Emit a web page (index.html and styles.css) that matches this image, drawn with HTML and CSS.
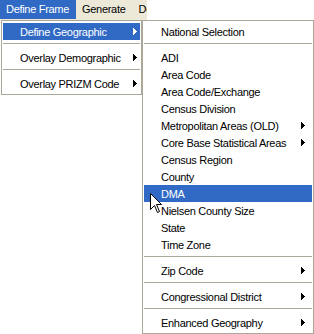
FILE: index.html
```html
<!DOCTYPE html>
<html>
<head>
<meta charset="utf-8">
<link rel="stylesheet" href="styles.css">
</head>
<body>
<div class="menubar">
  <span class="top active">Define Frame</span>
  <span class="top">Generate</span>
  <span class="top">De</span>
</div>
<div class="menus">
  <ul class="menu main">
    <li class="item hl"><span class="label">Define Geographic</span><svg class="arrow" width="4" height="7" viewBox="0 0 4 7"><path d="M0 0h1v7h-1zM1 1h1v5h-1zM2 2h1v3h-1zM3 3h1v1h-1z"/></svg></li>
    <li class="sep"></li>
    <li class="item"><span class="label">Overlay Demographic</span><svg class="arrow" width="4" height="7" viewBox="0 0 4 7"><path d="M0 0h1v7h-1zM1 1h1v5h-1zM2 2h1v3h-1zM3 3h1v1h-1z"/></svg></li>
    <li class="sep"></li>
    <li class="item"><span class="label">Overlay PRIZM Code</span><svg class="arrow" width="4" height="7" viewBox="0 0 4 7"><path d="M0 0h1v7h-1zM1 1h1v5h-1zM2 2h1v3h-1zM3 3h1v1h-1z"/></svg></li>
  </ul>
  <ul class="menu sub">
    <li class="item"><span class="label">National Selection</span></li>
    <li class="sep"></li>
    <li class="item"><span class="label">ADI</span></li>
    <li class="item"><span class="label">Area Code</span></li>
    <li class="item"><span class="label">Area Code/Exchange</span></li>
    <li class="item"><span class="label">Census Division</span></li>
    <li class="item"><span class="label">Metropolitan Areas (OLD)</span><svg class="arrow" width="4" height="7" viewBox="0 0 4 7"><path d="M0 0h1v7h-1zM1 1h1v5h-1zM2 2h1v3h-1zM3 3h1v1h-1z"/></svg></li>
    <li class="item"><span class="label">Core Base Statistical Areas</span><svg class="arrow" width="4" height="7" viewBox="0 0 4 7"><path d="M0 0h1v7h-1zM1 1h1v5h-1zM2 2h1v3h-1zM3 3h1v1h-1z"/></svg></li>
    <li class="item"><span class="label">Census Region</span></li>
    <li class="item"><span class="label">County</span></li>
    <li class="item hl"><span class="label">DMA</span></li>
    <li class="item"><span class="label">Nielsen County Size</span></li>
    <li class="item"><span class="label">State</span></li>
    <li class="item"><span class="label">Time Zone</span></li>
    <li class="sep"></li>
    <li class="item"><span class="label">Zip Code</span><svg class="arrow" width="4" height="7" viewBox="0 0 4 7"><path d="M0 0h1v7h-1zM1 1h1v5h-1zM2 2h1v3h-1zM3 3h1v1h-1z"/></svg></li>
    <li class="sep"></li>
    <li class="item"><span class="label">Congressional District</span><svg class="arrow" width="4" height="7" viewBox="0 0 4 7"><path d="M0 0h1v7h-1zM1 1h1v5h-1zM2 2h1v3h-1zM3 3h1v1h-1z"/></svg></li>
    <li class="sep"></li>
    <li class="item"><span class="label">Enhanced Geography</span><svg class="arrow" width="4" height="7" viewBox="0 0 4 7"><path d="M0 0h1v7h-1zM1 1h1v5h-1zM2 2h1v3h-1zM3 3h1v1h-1z"/></svg></li>
  </ul>
</div>
<svg class="cursor" width="13" height="20" viewBox="0 0 13 20"><path d="M0.5 0.5 L0.5 16.5 L4.5 12.5 L7.5 19.5 L9.5 18.5 L6.5 11.5 L11.5 11.5 Z" fill="#fff" stroke="#000" stroke-width="1" stroke-linejoin="miter"/></svg>
</body>
</html>
```
FILE: styles.css
```css
* { box-sizing: border-box; }
html, body {
  margin: 0;
  padding: 0;
  background: #fff;
}
body {
  position: relative;
  width: 314px;
  height: 334px;
  overflow: hidden;
  font-family: "Liberation Sans", Arial, sans-serif;
  font-size: 11px;
  letter-spacing: -0.3px;
  color: #000;
}
.menubar {
  display: flex;
  width: 147px;
  height: 20px;
  background: #ece9d8;
  overflow: hidden;
  white-space: nowrap;
}
.top {
  height: 19px;
  line-height: 19px;
  padding: 0 7px 0 6px;
}
.top.active {
  background: #316ac5;
  color: #fff;
}
.menus {
  display: flex;
  align-items: flex-start;
}
.menu {
  list-style: none;
  margin: 0;
  background: #fff;
  border: 1px solid #aca899;
  padding: 2px 1px;
}
.main {
  width: 141px;
  margin-left: 1px;
}
.sub {
  width: 172px;
}
.item {
  display: flex;
  align-items: center;
  height: 17px;
  white-space: nowrap;
}
.main .item { padding: 0 3px 0 17px; }
.sub .item { padding: 0 7px 0 17px; }
.label { flex: 1; }
.arrow { fill: #000; display: block; }
.item.hl {
  background: #316ac5;
  color: #fff;
}
.item.hl .arrow { fill: #fff; }
.sep {
  height: 9px;
  padding-top: 3px;
}
.sep::before {
  content: "";
  display: block;
  height: 1px;
  background: #aca899;
}
.cursor {
  position: absolute;
  left: 150px;
  top: 193px;
}
```
